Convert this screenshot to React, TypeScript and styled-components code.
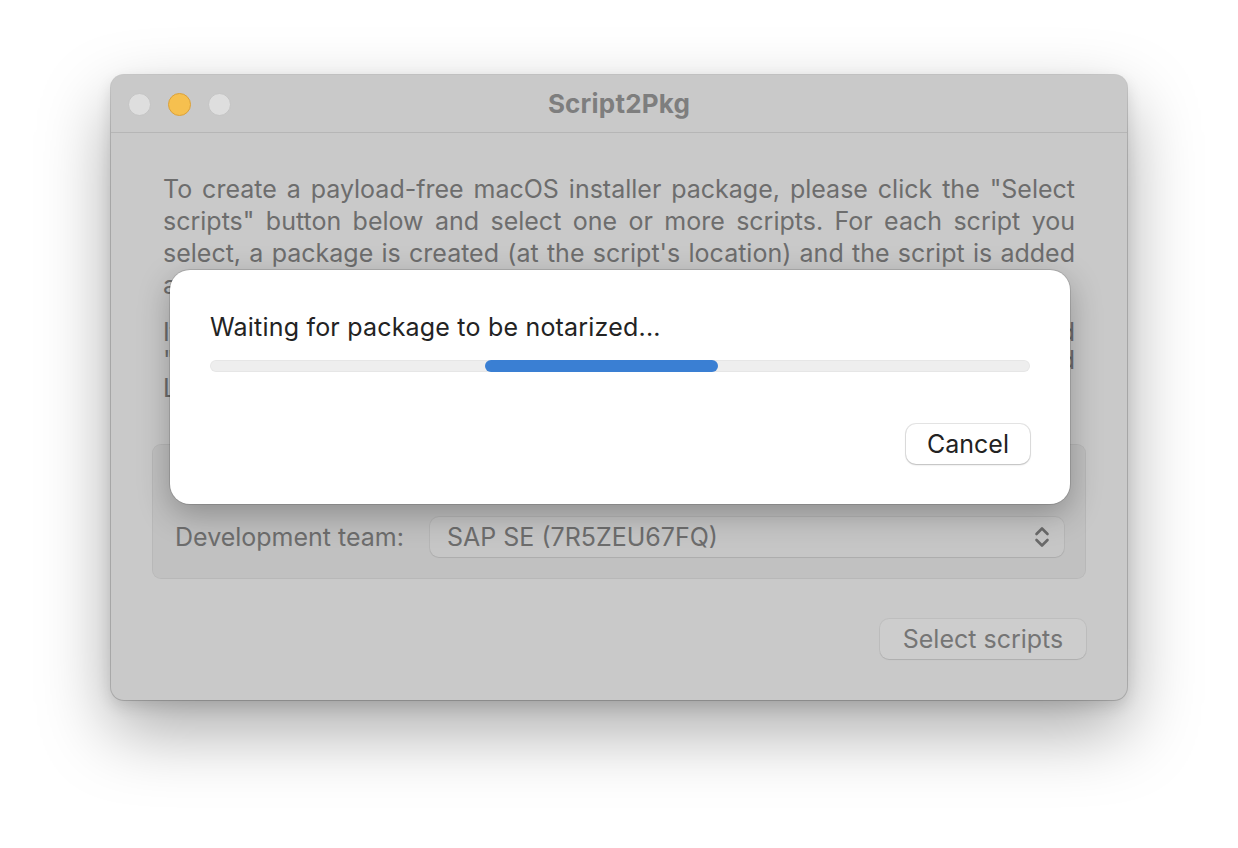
import React from "react";
import styled, { createGlobalStyle } from "styled-components";

const Global = createGlobalStyle`
  html, body { margin: 0; padding: 0; background: #ffffff; }
  body { font-family: Inter, "Noto Sans", "Liberation Sans", sans-serif; -webkit-font-smoothing: antialiased; }
`;

const Stage = styled.div`
  width: 1238px;
  height: 848px;
  padding: 75px 0 0 111px;
  box-sizing: border-box;
  background: #ffffff;
`;

const Window = styled.div`
  position: relative;
  width: 1016px;
  height: 625px;
  box-sizing: border-box;
  background: #c9c9c9;
  border-radius: 13px;
  box-shadow: 0 0 0 1px rgba(0, 0, 0, 0.17), 0 30px 70px rgba(0, 0, 0, 0.34), 0 6px 16px rgba(0, 0, 0, 0.12);
  display: flex;
  flex-direction: column;
`;

const TitleBar = styled.div`
  flex-shrink: 0;
  height: 57px;
  border-bottom: 1px solid #b6b6b6;
  display: flex;
  align-items: center;
  position: relative;
  padding-left: 17px;
`;

const Lights = styled.div`
  display: flex;
  gap: 17px;
  align-items: center;
  margin-top: 1px;
`;

const Light = styled.div<{ $active?: boolean }>`
  width: 23px;
  height: 23px;
  border-radius: 50%;
  box-sizing: border-box;
  background: ${(p) => (p.$active ? "#f6c04f" : "#dedede")};
  border: 1px solid ${(p) => (p.$active ? "#dba13a" : "#c4c4c4")};
`;

const Title = styled.div`
  position: absolute;
  left: 0;
  right: 0;
  text-align: center;
  font-weight: 700;
  font-size: 26px;
  color: #7e7e7e;
  pointer-events: none;
  letter-spacing: 0.2px;
  margin-top: -1px;
`;

const Content = styled.div`
  padding: 40px 41px 40px;
  display: flex;
  flex-direction: column;
  flex: 1;
`;

const Para = styled.div<{ $lh: number }>`
  margin: 0 11px;
  color: #6d6d6d;
  font-size: 25px;
  line-height: ${(p) => p.$lh}px;
`;

const Line = styled.div<{ $last?: boolean }>`
  white-space: nowrap;
  text-align: justify;
  text-align-last: ${(p) => (p.$last ? "left" : "justify")};
`;

const Para2 = styled(Para)`
  margin-top: 17px;
`;

const GroupBox = styled.div`
  margin-top: 42px;
  border-radius: 9px;
  background: rgba(0, 0, 0, 0.035);
  border: 1px solid rgba(0, 0, 0, 0.05);
  padding: 8px 21px 21px 22px;
  display: flex;
  flex-direction: column;
  gap: 34px;
`;

const Row = styled.div<{ $h: number }>`
  display: flex;
  align-items: center;
  height: ${(p) => p.$h}px;
`;

const Label = styled.div`
  width: 255px;
  font-size: 25px;
  color: #6d6d6d;
`;

const Check = styled.div`
  width: 20px;
  height: 20px;
  border-radius: 5px;
  background: #d4d4d4;
  border: 1px solid #aaa;
  margin-right: 10px;
`;

const Popup = styled.div`
  flex: 1;
  height: 40px;
  box-sizing: border-box;
  border-radius: 9px;
  background: rgba(255, 255, 255, 0.09);
  box-shadow: 0 0 0 1px rgba(0, 0, 0, 0.05), 0 1px 1px rgba(0, 0, 0, 0.06);
  display: flex;
  align-items: center;
  justify-content: space-between;
  padding: 0 13px 0 17px;
  font-size: 25px;
  color: #6d6d6d;
`;

const Footer = styled.div`
  margin-top: 40px;
  display: flex;
  justify-content: flex-end;
`;

const GhostButton = styled.div`
  width: 206px;
  height: 40px;
  box-sizing: border-box;
  border-radius: 9px;
  background: rgba(255, 255, 255, 0.08);
  box-shadow: 0 0 0 1px rgba(0, 0, 0, 0.05), 0 1px 1px rgba(0, 0, 0, 0.08);
  display: flex;
  align-items: center;
  justify-content: center;
  font-size: 25px;
  color: #757575;
`;

const Sheet = styled.div`
  position: absolute;
  top: 195px;
  left: 59px;
  width: 900px;
  height: 234px;
  box-sizing: border-box;
  background: #ffffff;
  border-radius: 20px;
  box-shadow: 0 0 0 1px rgba(0, 0, 0, 0.12), 0 10px 32px rgba(0, 0, 0, 0.28);
  padding: 43px 40px 40px;
  display: flex;
  flex-direction: column;
`;

const SheetText = styled.div`
  font-size: 25px;
  line-height: 28px;
  color: #232323;
  letter-spacing: 0.2px;
`;

const Track = styled.div`
  margin-top: 19px;
  height: 12px;
  border-radius: 6px;
  background: #eeeeee;
  box-shadow: inset 0 0 0 1px rgba(0, 0, 0, 0.03);
  position: relative;
  overflow: hidden;
`;

const Fill = styled.div<{ $start: number; $size: number }>`
  position: absolute;
  top: 0;
  bottom: 0;
  left: ${(p) => p.$start}%;
  width: ${(p) => p.$size}%;
  border-radius: 6px;
  background: #3a7fd3;
`;

const Actions = styled.div`
  margin-top: auto;
  display: flex;
  justify-content: flex-end;
`;

const Button = styled.div`
  width: 124px;
  height: 40px;
  box-sizing: border-box;
  border-radius: 10px;
  background: #ffffff;
  box-shadow: 0 0 0 1px rgba(0, 0, 0, 0.1), 0 1px 2px rgba(0, 0, 0, 0.18);
  display: flex;
  align-items: center;
  justify-content: center;
  font-size: 25px;
  color: #222;
`;

const Chevrons = () => (
  <svg width="18" height="24" viewBox="0 0 18 24" fill="none">
    <path d="M3.5 9 L9 3.5 L14.5 9" stroke="#6a6a6a" strokeWidth="2.6" strokeLinecap="round" strokeLinejoin="round" />
    <path d="M3.5 15 L9 20.5 L14.5 15" stroke="#6a6a6a" strokeWidth="2.6" strokeLinecap="round" strokeLinejoin="round" />
  </svg>
);

export default function App() {
  return (
    <>
      <Global />
      <Stage>
        <Window>
          <TitleBar>
            <Lights>
              <Light />
              <Light $active />
              <Light />
            </Lights>
            <Title>Script2Pkg</Title>
          </TitleBar>
          <Content>
            <Para $lh={32}>
              <Line>To create a payload-free macOS installer package, please click the "Select</Line>
              <Line>scripts" button below and select one or more scripts. For each script you</Line>
              <Line>select, a package is created (at the script's location) and the script is added</Line>
              <Line $last>as a postinstall script to the package.</Line>
            </Para>
            <Para2 $lh={28}>
              <Line>If you want to sign the package, please select a signing identity and</Line>
              <Line>"Notarize package" to submit the package to Apple for notarization and</Line>
              <Line $last>Learn more about notarization.</Line>
            </Para2>
            <GroupBox>
              <Row $h={30}>
                <Check />
                <Label>Sign and notarize package</Label>
              </Row>
              <Row $h={40}>
                <Label>Development team:</Label>
                <Popup>
                  <span>SAP SE (7R5ZEU67FQ)</span>
                  <Chevrons />
                </Popup>
              </Row>
            </GroupBox>
            <Footer>
              <GhostButton>Select scripts</GhostButton>
            </Footer>
          </Content>
          <Sheet>
            <SheetText>Waiting for package to be notarized...</SheetText>
            <Track>
              <Fill $start={33.5} $size={28.4} />
            </Track>
            <Actions>
              <Button>Cancel</Button>
            </Actions>
          </Sheet>
        </Window>
      </Stage>
    </>
  );
}
